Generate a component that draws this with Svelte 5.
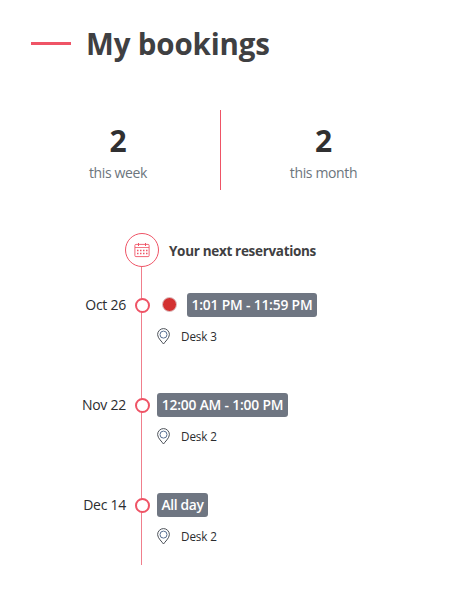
<script lang="ts">
  type Booking = {
    date: string;
    time: string;
    desk: string;
    active?: boolean;
    kind: string;
  };

  const stats = [
    { count: 2, label: "this week" },
    { count: 2, label: "this month" },
  ];

  const bookings: Booking[] = [
    { date: "Oct 26", time: "1:01 PM - 11:59 PM", desk: "Desk 3", active: true, kind: "evening" },
    { date: "Nov 22", time: "12:00 AM - 1:00 PM", desk: "Desk 2", kind: "morning" },
    { date: "Dec 14", time: "All day", desk: "Desk 2", kind: "all-day" },
  ];
</script>

<main>
  <header>
    <span class="dash"></span>
    <h1>My bookings</h1>
  </header>

  <section class="stats">
    {#each stats as stat}
      <div class="stat">
        <strong>{stat.count}</strong>
        <span class="label">{stat.label}</span>
      </div>
    {/each}
  </section>

  <section class="timeline">
    <div class="heading">
      <span class="calendar">
        <svg width="16" height="16" viewBox="0 0 16 16" fill="none" stroke="currentColor">
          <rect x="0.9" y="2.4" width="14.2" height="12.2" rx="1" stroke-width="0.9" />
          <path d="M1 5.5H15" stroke-width="0.8" />
          <path d="M4.5 1V4M11.5 1V4" stroke-width="1" />
          <path
            d="M3 8.5H13.6M3 11.5H13.6"
            stroke-width="1.3"
            stroke-dasharray="1.5 1.5"
          />
        </svg>
      </span>
      <h2>Your next reservations</h2>
    </div>

    <ul>
      {#each bookings as booking}
        <li>
          <span class="date">{booking.date}</span>
          <span class="rail"><span class="node"></span></span>
          <div class="details">
            <div class="slot">
              {#if booking.active}
                <span class="live"></span>
              {/if}
              <span class="badge {booking.kind}">{booking.time}</span>
            </div>
            <div class="desk">
              <svg width="13" height="17" viewBox="0 0 13 17" fill="none">
                <path
                  d="M6.5 16C5.3 14 0.6 10.2 0.6 6.6A5.9 6 0 0 1 12.4 6.6C12.4 10.2 7.7 14 6.5 16Z"
                  stroke="#4b5058"
                />
                <circle cx="6.5" cy="6.6" r="3.5" stroke="#5a7093" />
              </svg>
              <span>{booking.desk}</span>
            </div>
          </div>
        </li>
      {/each}
    </ul>
  </section>
</main>

<style>
  :global(body) {
    margin: 0;
    background: #fff;
  }

  main {
    box-sizing: border-box;
    width: 452px;
    height: 593px;
    padding-top: 22px;
    overflow: hidden;
    font-family: "Open Sans", "Noto Sans", sans-serif;
    color: #2b2d30;
  }

  h1,
  h2,
  ul {
    margin: 0;
    padding: 0;
  }

  header {
    display: flex;
    align-items: center;
    height: 42px;
    padding-left: 31px;
    gap: 15px;
  }

  .dash {
    width: 40px;
    height: 3px;
    background: #ef5466;
  }

  h1 {
    padding-top: 1px;
    font-size: 29.5px;
    line-height: 42px;
    font-weight: 700;
    letter-spacing: -0.15px;
    color: #3f4042;
    white-space: nowrap;
  }

  .stats {
    display: grid;
    grid-template-columns: 205px 205px;
    height: 80px;
    margin: 46px 0 0 16px;
  }

  .stat {
    display: flex;
    flex-direction: column;
    align-items: center;
  }

  .stat:first-child {
    box-sizing: border-box;
    border-right: 1px solid #ef5466;
  }

  .stat strong {
    margin-top: 10px;
    font-size: 30px;
    line-height: 42px;
    color: #303031;
  }

  .label {
    font-size: 14px;
    line-height: 22px;
    letter-spacing: -0.35px;
    color: #6c757d;
  }

  .timeline {
    margin-top: 43px;
  }

  .heading {
    display: flex;
    align-items: center;
    height: 34px;
    padding-left: 125px;
    gap: 10px;
  }

  .calendar {
    box-sizing: border-box;
    display: flex;
    align-items: center;
    justify-content: center;
    width: 34px;
    height: 34px;
    border: 1px solid #ef5466;
    border-radius: 50%;
    color: #ef5466;
  }

  h2 {
    padding-top: 2px;
    font-size: 13.5px;
    line-height: 20px;
    letter-spacing: -0.32px;
    color: #3f4042;
    white-space: nowrap;
  }

  ul {
    list-style: none;
  }

  li {
    display: grid;
    grid-template-columns: 126px 32px 1fr;
    height: 100px;
  }

  li:last-child {
    height: 98px;
  }

  .date {
    padding-top: 26px;
    font-size: 14px;
    line-height: 24px;
    letter-spacing: -0.25px;
    text-align: right;
    white-space: nowrap;
  }

  .rail {
    display: flex;
    justify-content: center;
    align-items: flex-start;
    width: 32px;
    background: linear-gradient(#f07f8c, #f07f8c) 15px 0 / 1px 100% no-repeat;
  }

  .node {
    box-sizing: border-box;
    width: 15px;
    height: 15px;
    margin-top: 31px;
    border: 2px solid #ef5466;
    border-radius: 50%;
    background: #fff;
  }

  .details {
    margin-left: -1px;
    padding-top: 26px;
  }

  .slot {
    display: flex;
    align-items: center;
    height: 24px;
  }

  .live {
    box-sizing: border-box;
    width: 15px;
    height: 15px;
    margin: 0 10px 1px 5px;
    border: 1px solid #dcc4c6;
    border-radius: 50%;
    background: #d33131;
  }

  .badge {
    box-sizing: border-box;
    height: 24px;
    border-radius: 3px;
    background: #6f7682;
    color: #fff;
    font-size: 13.8px;
    font-weight: 600;
    line-height: 24px;
    letter-spacing: -0.17px;
    text-align: center;
    white-space: nowrap;
  }

  .evening {
    width: 130px;
  }

  .morning {
    width: 131px;
  }

  .all-day {
    width: 51px;
    letter-spacing: -0.35px;
  }

  .desk {
    display: flex;
    align-items: center;
    height: 20px;
    margin-top: 9px;
    gap: 11px;
    font-size: 11.7px;
    line-height: 20px;
    letter-spacing: -0.1px;
  }
</style>
